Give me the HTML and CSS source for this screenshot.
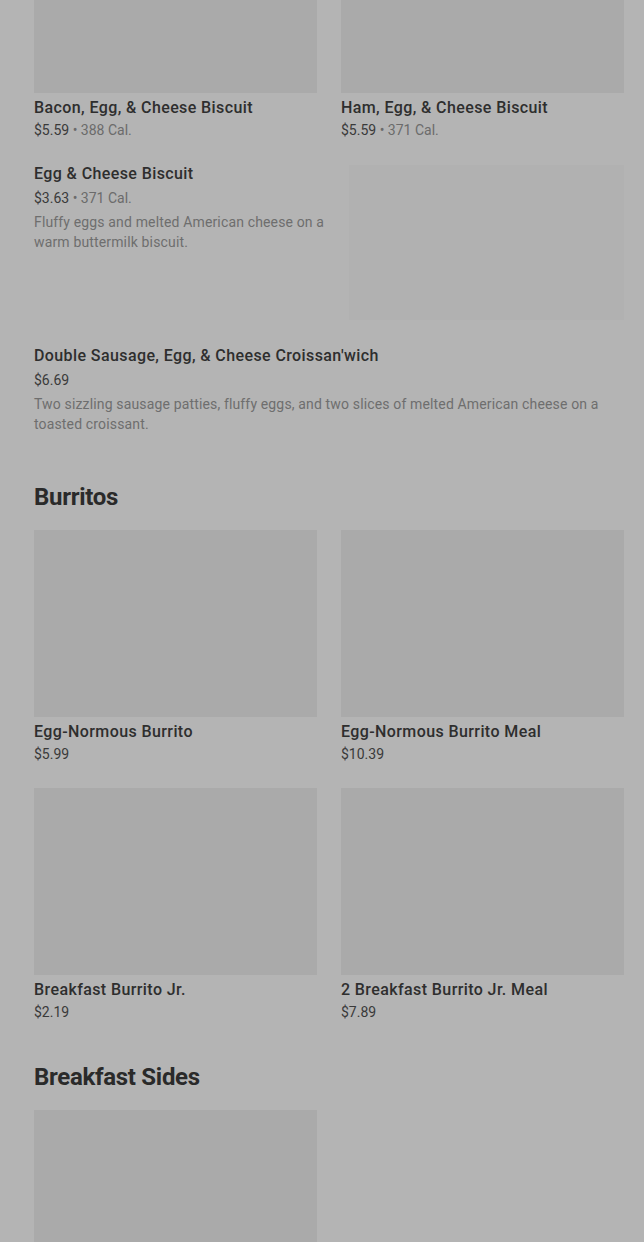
FILE: index.html
```html
<!DOCTYPE html>
<html lang="en">
<head>
    <meta charset="UTF-8">
    <meta name="viewport" content="width=device-width, initial-scale=1.0">
    <title>Menu</title>
    <link rel="stylesheet" href="styles.css">
</head>
<body>
<div class="menu">
    <div class="grid top-grid">
        <div class="card">
            <div class="thumb"></div>
            <div class="item-name">Bacon, Egg, &amp; Cheese Biscuit</div>
            <div class="item-meta">$5.59 <span class="cal">&bull; 388 Cal.</span></div>
        </div>
        <div class="card">
            <div class="thumb"></div>
            <div class="item-name">Ham, Egg, &amp; Cheese Biscuit</div>
            <div class="item-meta">$5.59 <span class="cal">&bull; 371 Cal.</span></div>
        </div>
    </div>

    <div class="row-item">
        <div class="row-text">
            <div class="item-name">Egg &amp; Cheese Biscuit</div>
            <div class="item-meta">$3.63 <span class="cal">&bull; 371 Cal.</span></div>
            <div class="item-desc">Fluffy eggs and melted American cheese on a warm buttermilk biscuit.</div>
        </div>
        <div class="row-thumb"></div>
    </div>

    <div class="row-item no-thumb">
        <div class="row-text">
            <div class="item-name">Double Sausage, Egg, &amp; Cheese Croissan'wich</div>
            <div class="item-meta">$6.69</div>
            <div class="item-desc">Two sizzling sausage patties, fluffy eggs, and two slices of melted American cheese on a toasted croissant.</div>
        </div>
    </div>

    <h2 class="section-title">Burritos</h2>
    <div class="grid">
        <div class="card">
            <div class="thumb"></div>
            <div class="item-name">Egg-Normous Burrito</div>
            <div class="item-meta">$5.99</div>
        </div>
        <div class="card">
            <div class="thumb"></div>
            <div class="item-name">Egg-Normous Burrito Meal</div>
            <div class="item-meta">$10.39</div>
        </div>
        <div class="card">
            <div class="thumb"></div>
            <div class="item-name">Breakfast Burrito Jr.</div>
            <div class="item-meta">$2.19</div>
        </div>
        <div class="card">
            <div class="thumb"></div>
            <div class="item-name">2 Breakfast Burrito Jr. Meal</div>
            <div class="item-meta">$7.89</div>
        </div>
    </div>

    <h2 class="section-title sides-title">Breakfast Sides</h2>
    <div class="grid">
        <div class="card">
            <div class="thumb"></div>
        </div>
    </div>
</div>
</body>
</html>
```

FILE: styles.css
```css
body {
    margin: 0;
    background-color: #b4b4b4;
    font-family: Roboto, "Liberation Sans", sans-serif;
    color: #2e2e2e;
    overflow: hidden;
}
.menu {
    padding: 0 20px 0 34px;
    margin-top: -94px;
}
.grid {
    display: grid;
    grid-template-columns: 283px 283px;
    column-gap: 24px;
    row-gap: 24px;
}
.thumb {
    height: 187px;
    background-color: #aaaaaa;
    margin-bottom: 4px;
}
.item-name {
    font-size: 16px;
    font-weight: 500;
    line-height: 22px;
    letter-spacing: 0.4px;
    color: #2e2e2e;
}
.item-meta {
    font-size: 14px;
    line-height: 20px;
    color: #3a3a3a;
    margin-top: 1px;
}
.cal {
    color: #6b6b6b;
}
.item-desc {
    font-size: 14px;
    line-height: 20px;
    letter-spacing: 0.15px;
    color: #6e6e6e;
    margin-top: 4px;
}
.row-item {
    display: flex;
    gap: 20px;
    margin-top: 22px;
    min-height: 158px;
}
.row-item .item-meta {
    margin-top: 3px;
}
.row-text {
    flex: 1;
    padding-top: 1px;
}
.row-thumb {
    width: 275px;
    height: 155px;
    margin-top: 3px;
    flex-shrink: 0;
    background-color: #b1b1b1;
}
.no-thumb {
    min-height: 0;
    margin-top: 24px;
}
.section-title {
    font-size: 24px;
    font-weight: 700;
    line-height: 32px;
    letter-spacing: -0.3px;
    color: #2a2a2a;
    margin: 47px 0 17px;
}
.sides-title {
    margin-top: 39px;
}
```
